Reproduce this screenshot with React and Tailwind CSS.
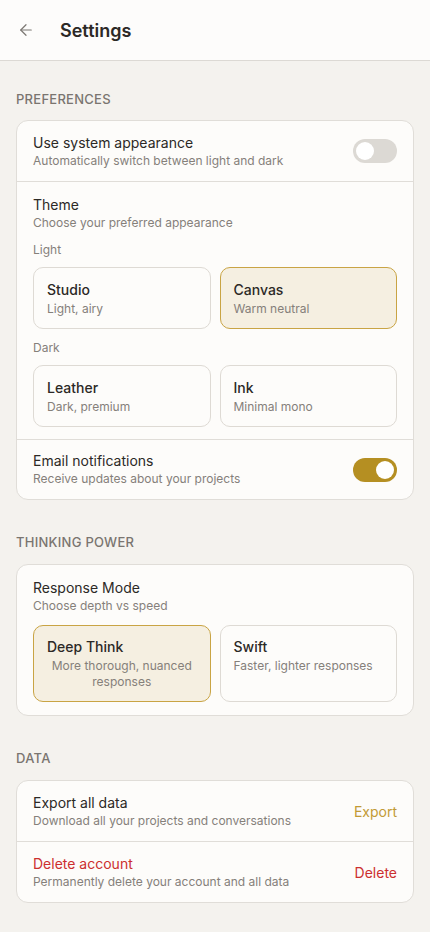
import { ArrowLeft } from 'lucide-react';

function Toggle({ on }) {
    return (
        <div className={`w-[44px] h-[24px] rounded-full flex items-center px-[3px] shrink-0 ${on ? 'bg-[#b58f22] justify-end' : 'bg-[#dcd9d4] justify-start'}`}>
            <div className="w-[18px] h-[18px] rounded-full bg-white" />
        </div>
    );
}

function Option({ title, desc, selected, center }) {
    return (
        <div className={`rounded-[10px] border px-[13px] flex flex-col justify-center ${selected ? 'bg-[#f5efe1] border-[#c9a444]' : 'bg-[#fdfcfa] border-[#dedad4]'}`}>
            <div className="text-[14px] font-medium text-[#2c2926] leading-[20px]">{title}</div>
            <div className={`text-[12px] text-[#85807a] leading-[16px] mt-[1px] ${center ? 'text-center' : ''}`}>{desc}</div>
        </div>
    );
}

function SectionLabel({ children, className }) {
    return (
        <div className={`px-4 text-[13px] font-medium tracking-[0.02em] text-[#7a7570] uppercase leading-[18px] ${className}`}>{children}</div>
    );
}

export default function App() {
    return (
        <div className="min-h-screen bg-[#f4f2ee] pb-8" style={{ fontFamily: 'Inter, "Noto Sans", sans-serif' }}>
            {/* Header */}
            <div className="h-[61px] bg-[#fdfcfb] border-b border-[#dcd9d4] flex items-center">
                <ArrowLeft size={18} strokeWidth={1.6} className="ml-[17px] text-[#7b7772]" />
                <h1 className="ml-[25px] text-[18px] font-semibold text-[#2c2926]">Settings</h1>
            </div>

            {/* Preferences */}
            <SectionLabel className="mt-[29px] mb-[12px]">Preferences</SectionLabel>
            <div className="mx-4 bg-[#fdfcfa] border border-[#e0ddd8] rounded-[12px]">
                <div className="flex items-center justify-between px-4 h-[60px]">
                    <div>
                        <div className="text-[14px] text-[#2c2926] leading-[18px]">Use system appearance</div>
                        <div className="text-[12px] text-[#85807a] leading-[16px] mt-[1px]">Automatically switch between light and dark</div>
                    </div>
                    <Toggle on={false} />
                </div>
                <div className="border-t border-[#e0ddd8] px-4 pt-[14px] pb-[12px]">
                    <div className="text-[14px] text-[#2c2926] leading-[18px]">Theme</div>
                    <div className="text-[12px] text-[#85807a] leading-[16px] mt-[1px]">Choose your preferred appearance</div>
                    <div className="text-[12px] text-[#85807a] mt-[11px] mb-[9px] leading-[16px]">Light</div>
                    <div className="grid grid-cols-2 gap-[9px] h-[62px]">
                        <Option title="Studio" desc="Light, airy" />
                        <Option title="Canvas" desc="Warm neutral" selected />
                    </div>
                    <div className="text-[12px] text-[#85807a] mt-[11px] mb-[9px] leading-[16px]">Dark</div>
                    <div className="grid grid-cols-2 gap-[9px] h-[62px]">
                        <Option title="Leather" desc="Dark, premium" />
                        <Option title="Ink" desc="Minimal mono" />
                    </div>
                </div>
                <div className="border-t border-[#e0ddd8] flex items-center justify-between px-4 h-[60px]">
                    <div>
                        <div className="text-[14px] text-[#2c2926] leading-[18px]">Email notifications</div>
                        <div className="text-[12px] text-[#85807a] leading-[16px] mt-[1px]">Receive updates about your projects</div>
                    </div>
                    <Toggle on />
                </div>
            </div>

            {/* Thinking power */}
            <SectionLabel className="mt-[33px] mb-[13px]">Thinking Power</SectionLabel>
            <div className="mx-4 bg-[#fdfcfa] border border-[#e0ddd8] rounded-[12px] px-4 pt-[14px] pb-[13px]">
                <div className="text-[14px] text-[#2c2926] leading-[18px]">Response Mode</div>
                <div className="text-[12px] text-[#85807a] leading-[16px] mt-[1px]">Choose depth vs speed</div>
                <div className="grid grid-cols-2 gap-[9px] h-[77px] mt-[11px]">
                    <Option title="Deep Think" desc="More thorough, nuanced responses" selected center />
                    <div className="rounded-[10px] border px-[13px] pt-[11px] bg-[#fdfcfa] border-[#dedad4]">
                        <div className="text-[14px] font-medium text-[#2c2926] leading-[20px]">Swift</div>
                        <div className="text-[12px] text-[#85807a] leading-[16px] mt-[1px]">Faster, lighter responses</div>
                    </div>
                </div>
            </div>

            {/* Data */}
            <SectionLabel className="mt-[33px] mb-[13px]">Data</SectionLabel>
            <div className="mx-4 bg-[#fdfcfa] border border-[#e0ddd8] rounded-[12px]">
                <div className="flex items-center justify-between px-4 h-[60px]">
                    <div>
                        <div className="text-[14px] text-[#2c2926] leading-[18px]">Export all data</div>
                        <div className="text-[12px] text-[#85807a] leading-[16px] mt-[1px]">Download all your projects and conversations</div>
                    </div>
                    <button className="text-[14px] text-[#c29a35]">Export</button>
                </div>
                <div className="border-t border-[#e0ddd8] flex items-center justify-between px-4 h-[61px]">
                    <div>
                        <div className="text-[14px] text-[#cc2f2f] leading-[18px]">Delete account</div>
                        <div className="text-[12px] text-[#85807a] leading-[16px] mt-[1px]">Permanently delete your account and all data</div>
                    </div>
                    <button className="text-[14px] text-[#cc2f2f]">Delete</button>
                </div>
            </div>
        </div>
    );
}
